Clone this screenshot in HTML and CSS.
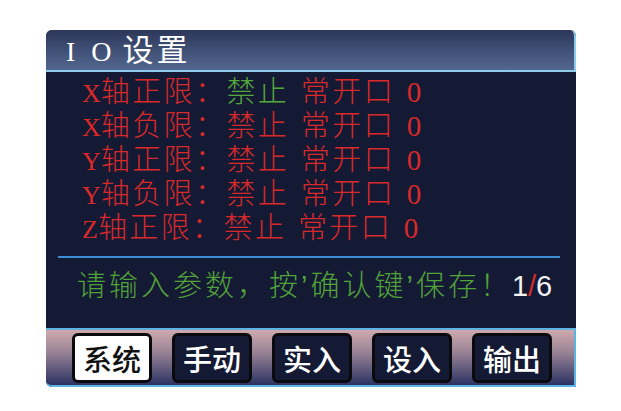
FILE: index.html
```html
<!DOCTYPE html>
<html lang="zh">
<head>
<meta charset="utf-8">
<title>IO设置</title>
<link rel="stylesheet" href="styles.css">
</head>
<body>
<div class="screen">
  <div class="titlebar"><span class="title"><span class="tl">I O</span> 设置</span></div>
  <div class="list">
    <div class="row"><span class="ax">X</span>轴正限：<span class="on">禁止</span> 常开口 0</div>
    <div class="row"><span class="ax">X</span>轴负限：禁止 常开口 0</div>
    <div class="row"><span class="ax">Y</span>轴正限：禁止 常开口 0</div>
    <div class="row"><span class="ax">Y</span>轴负限：禁止 常开口 0</div>
    <div class="row"><span class="ax">Z</span>轴正限：禁止 常开口 0</div>
  </div>
  <div class="sep"></div>
  <div class="hint">请输入参数，按’确认键’保存！<span class="page">1<span class="slash">/</span>6</span></div>
  <div class="footer">
    <div class="btn active">系统</div>
    <div class="btn">手动</div>
    <div class="btn">实入</div>
    <div class="btn">设入</div>
    <div class="btn">输出</div>
  </div>
</div>
</body>
</html>
```

FILE: styles.css
```css
html, body {
  margin: 0;
  padding: 0;
  background: #ffffff;
}

.screen {
  margin: 30px 0 0 46px;
  width: 530px;
  height: 357px;
  background: #141a33;
  display: flex;
  flex-direction: column;
  border-radius: 6px 6px 0 6px;
}

.titlebar {
  height: 40px;
  flex: none;
  background: linear-gradient(#2c375a, #53678f);
  border-bottom: 2px solid #8ccbea;
  border-right: 2px solid #8ccbea;
  border-radius: 6px 6px 0 0;
  display: flex;
  align-items: center;
  box-sizing: content-box;
}

.title {
  padding-left: 20px;
  color: #ffffff;
  font-family: "Noto Sans CJK SC", sans-serif;
  font-size: 31px;
  line-height: 36px;
  font-weight: 400;
  letter-spacing: 3px;
  word-spacing: 1px;
  white-space: nowrap;
}

.tl {
  font-family: "Liberation Serif", serif;
  font-size: 28px;
  letter-spacing: 0;
  word-spacing: 9px;
}

.list {
  padding: 3px 0 0 36px;
  font-family: "Liberation Serif", "Noto Sans CJK SC", serif;
  font-size: 29px;
  font-weight: 300;
  color: #d8292b;
  letter-spacing: 2.4px;
  word-spacing: 2px;
}

.row {
  height: 34px;
  line-height: 34px;
  white-space: nowrap;
}

.ax {
  font-size: 26px;
  letter-spacing: 0;
}

.on {
  color: #55a83c;
}

.sep {
  margin: 11px 16px 0 12px;
  height: 2px;
  background: #3a8fd2;
  flex: none;
}

.hint {
  height: 56px;
  line-height: 56px;
  padding-left: 31px;
  font-family: "Liberation Sans", "Noto Sans CJK SC", sans-serif;
  font-size: 29px;
  font-weight: 300;
  color: #52a23a;
  letter-spacing: 3px;
  white-space: nowrap;
}

.page {
  font-family: "Liberation Sans", sans-serif;
  font-size: 29px;
  font-weight: 400;
  color: #f2f2f2;
  letter-spacing: 0;
}

.slash {
  color: #d8292b;
}

.footer {
  margin-top: auto;
  flex: none;
  height: 52px;
  padding: 3px 0 0 26px;
  border-top: 2px solid #5db3e2;
  border-bottom: 2px solid #5db3e2;
  border-right: 2px solid #5db3e2;
  border-radius: 0 0 0 6px;
  background: linear-gradient(#cfa9ae, #9a8496 40%, #2b3262);
  display: flex;
  gap: 20px;
}

.btn {
  width: 74px;
  height: 44px;
  border: 3px solid #0a0a0f;
  border-radius: 6px;
  background: #141a33;
  color: #ffffff;
  font-family: "Noto Sans CJK SC", sans-serif;
  font-size: 29px;
  font-weight: 500;
  line-height: 44px;
  text-align: center;
  letter-spacing: 0;
}

.btn.active {
  background: #ffffff;
  color: #111111;
}
```
